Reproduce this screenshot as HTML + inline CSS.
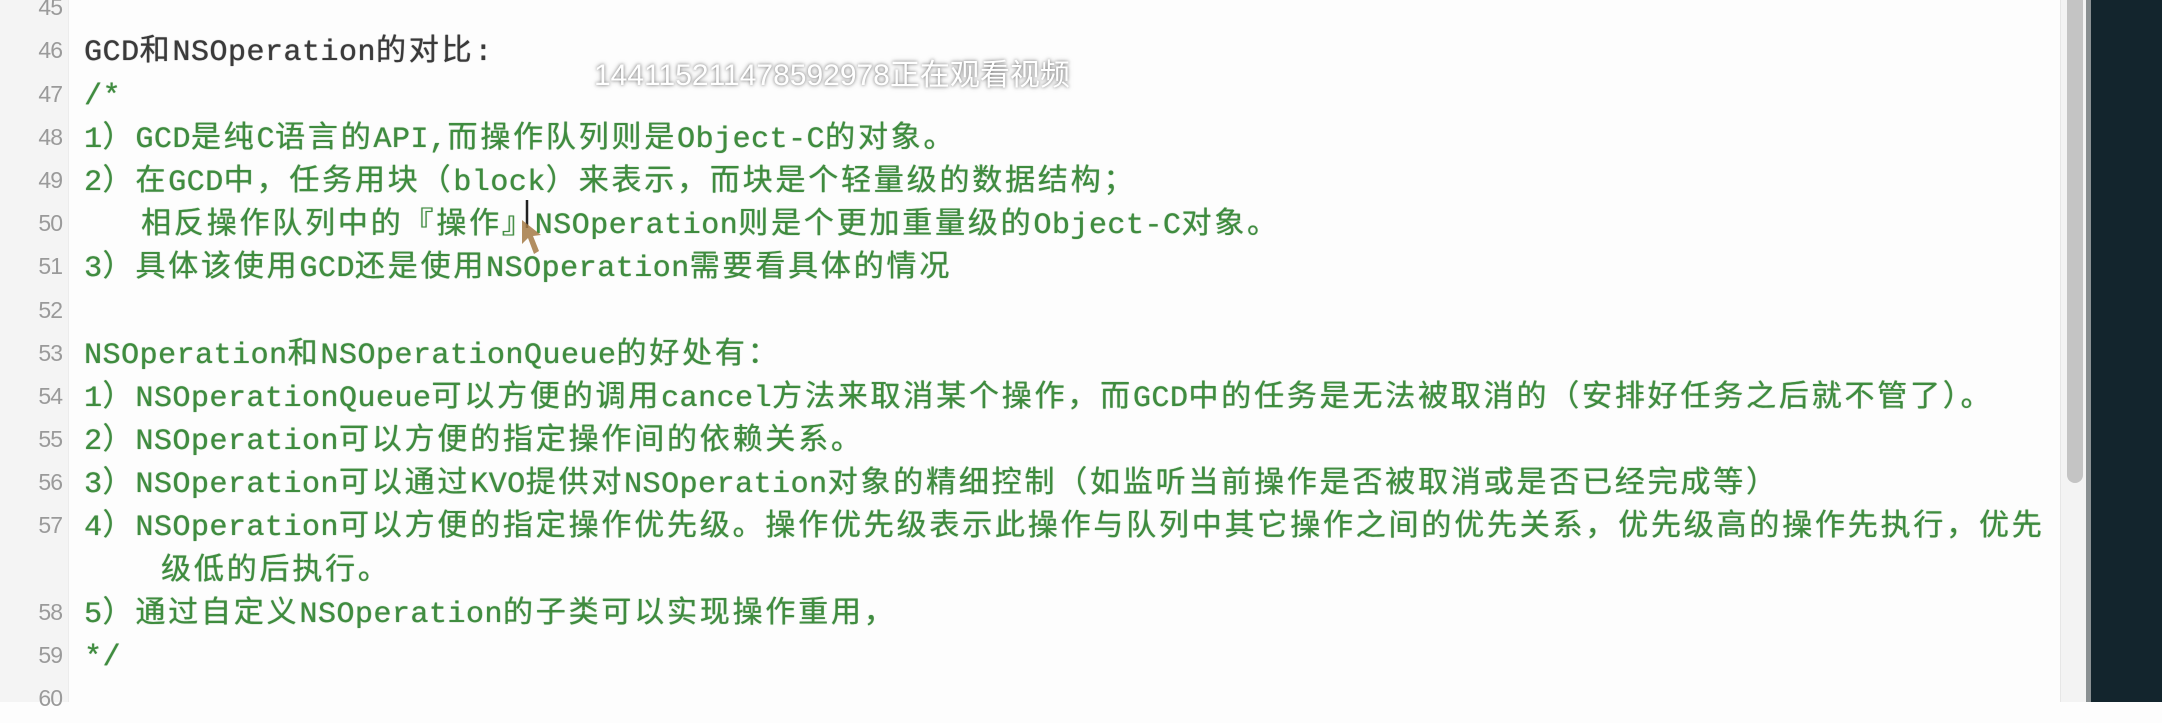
<!DOCTYPE html>
<html><head><meta charset="utf-8">
<style>
html,body{margin:0;padding:0;width:2162px;height:702px;overflow:hidden;background:#fdfdfd;}
#gut{position:absolute;left:0;top:0;width:68px;height:702px;background:#f4f4f4;border-right:1px solid #ececec;}
#code{position:absolute;left:0;top:-10.8px;width:2060px;}
.r{position:relative;height:43.2px;line-height:43.2px;white-space:pre;}
.n{position:absolute;left:0;top:5px;width:62px;text-align:right;color:#9a9a9a;font:23px "Liberation Sans",sans-serif;letter-spacing:-1px;}
.t{position:absolute;left:84px;color:#3f8c3f;font-family:"Liberation Mono","Noto Sans CJK SC",monospace;font-size:30px;letter-spacing:2.8px;text-shadow:0 0 1px rgba(60,130,60,.7),0.4px 0 0 rgba(60,140,60,.6);}
.t.d{color:#3a3a3a;text-shadow:0 0 1px rgba(40,40,40,.7),0.4px 0 0 rgba(40,40,40,.6);}
.l{font-family:"Liberation Mono",monospace;letter-spacing:0.5px;}
#sb{position:absolute;left:2060px;top:0;width:26px;height:702px;background:#f3f3f3;border-left:1px solid #e6e6e6;}
#thumb{position:absolute;left:2067px;top:0;width:16px;height:483px;border-radius:0 0 8px 8px;background:#c4c4c4;}
#line{position:absolute;left:2086px;top:0;width:5px;height:702px;background:#8a9092;}
#dark{position:absolute;left:2091px;top:0;width:71px;height:702px;background:#13252d;}
#wm{position:absolute;left:594px;top:50px;font:30px "Liberation Sans","Noto Sans CJK SC",sans-serif;color:#fff;text-shadow:0 0 3px rgba(0,0,0,.45),0 0 6px rgba(0,0,0,.25);white-space:nowrap;}
</style></head><body>
<div id="gut"></div>
<div id="code">
<div class="r"><span class="n">45</span></div>
<div class="r"><span class="n">46</span><span class="t d"><span class="l">GCD</span>和<span class="l">NSOperation</span>的对比<span class="l">:</span></span></div>
<div class="r"><span class="n">47</span><span class="t"><span class="l">/*</span></span></div>
<div class="r"><span class="n">48</span><span class="t"><span class="l">1</span>）<span class="l">GCD</span>是纯<span class="l">C</span>语言的<span class="l">API,</span>而操作队列则是<span class="l">Object-C</span>的对象。</span></div>
<div class="r"><span class="n">49</span><span class="t"><span class="l">2</span>）在<span class="l">GCD</span>中，任务用块（<span class="l">block</span>）来表示，而块是个轻量级的数据结构；</span></div>
<div class="r"><span class="n">50</span><span class="t" style="left:141px">相反操作队列中的『操作』<span class="l">NSOperation</span>则是个更加重量级的<span class="l">Object-C</span>对象。</span></div>
<div class="r"><span class="n">51</span><span class="t"><span class="l">3</span>）具体该使用<span class="l">GCD</span>还是使用<span class="l">NSOperation</span>需要看具体的情况</span></div>
<div class="r"><span class="n">52</span></div>
<div class="r"><span class="n">53</span><span class="t"><span class="l">NSOperation</span>和<span class="l">NSOperationQueue</span>的好处有：</span></div>
<div class="r"><span class="n">54</span><span class="t"><span class="l">1</span>）<span class="l">NSOperationQueue</span>可以方便的调用<span class="l">cancel</span>方法来取消某个操作，而<span class="l">GCD</span>中的任务是无法被取消的（安排好任务之后就不管了）。</span></div>
<div class="r"><span class="n">55</span><span class="t"><span class="l">2</span>）<span class="l">NSOperation</span>可以方便的指定操作间的依赖关系。</span></div>
<div class="r"><span class="n">56</span><span class="t"><span class="l">3</span>）<span class="l">NSOperation</span>可以通过<span class="l">KVO</span>提供对<span class="l">NSOperation</span>对象的精细控制（如监听当前操作是否被取消或是否已经完成等）</span></div>
<div class="r"><span class="n">57</span><span class="t"><span class="l">4</span>）<span class="l">NSOperation</span>可以方便的指定操作优先级。操作优先级表示此操作与队列中其它操作之间的优先关系，优先级高的操作先执行，优先</span></div>
<div class="r"><span class="t" style="left:161px">级低的后执行。</span></div>
<div class="r"><span class="n">58</span><span class="t"><span class="l">5</span>）通过自定义<span class="l">NSOperation</span>的子类可以实现操作重用，</span></div>
<div class="r"><span class="n">59</span><span class="t"><span class="l">*/</span></span></div>
<div class="r"><span class="n">60</span></div>
</div>
<svg style="position:absolute;left:510px;top:198px" width="40" height="66" viewBox="0 0 40 66">
<path d="M17 2 L17 30" stroke="#222" stroke-width="2.5"/>
<path d="M12 22 L12 46 L18 40 L24 56 L29 53 L23 38 L31 37 Z" fill="#a57a45" opacity=".85"/>
</svg>
<div id="sb"></div>
<div id="thumb"></div>
<div id="line"></div>
<div id="dark"></div>
<div id="wm">144115211478592978正在观看视频</div>
</body></html>
